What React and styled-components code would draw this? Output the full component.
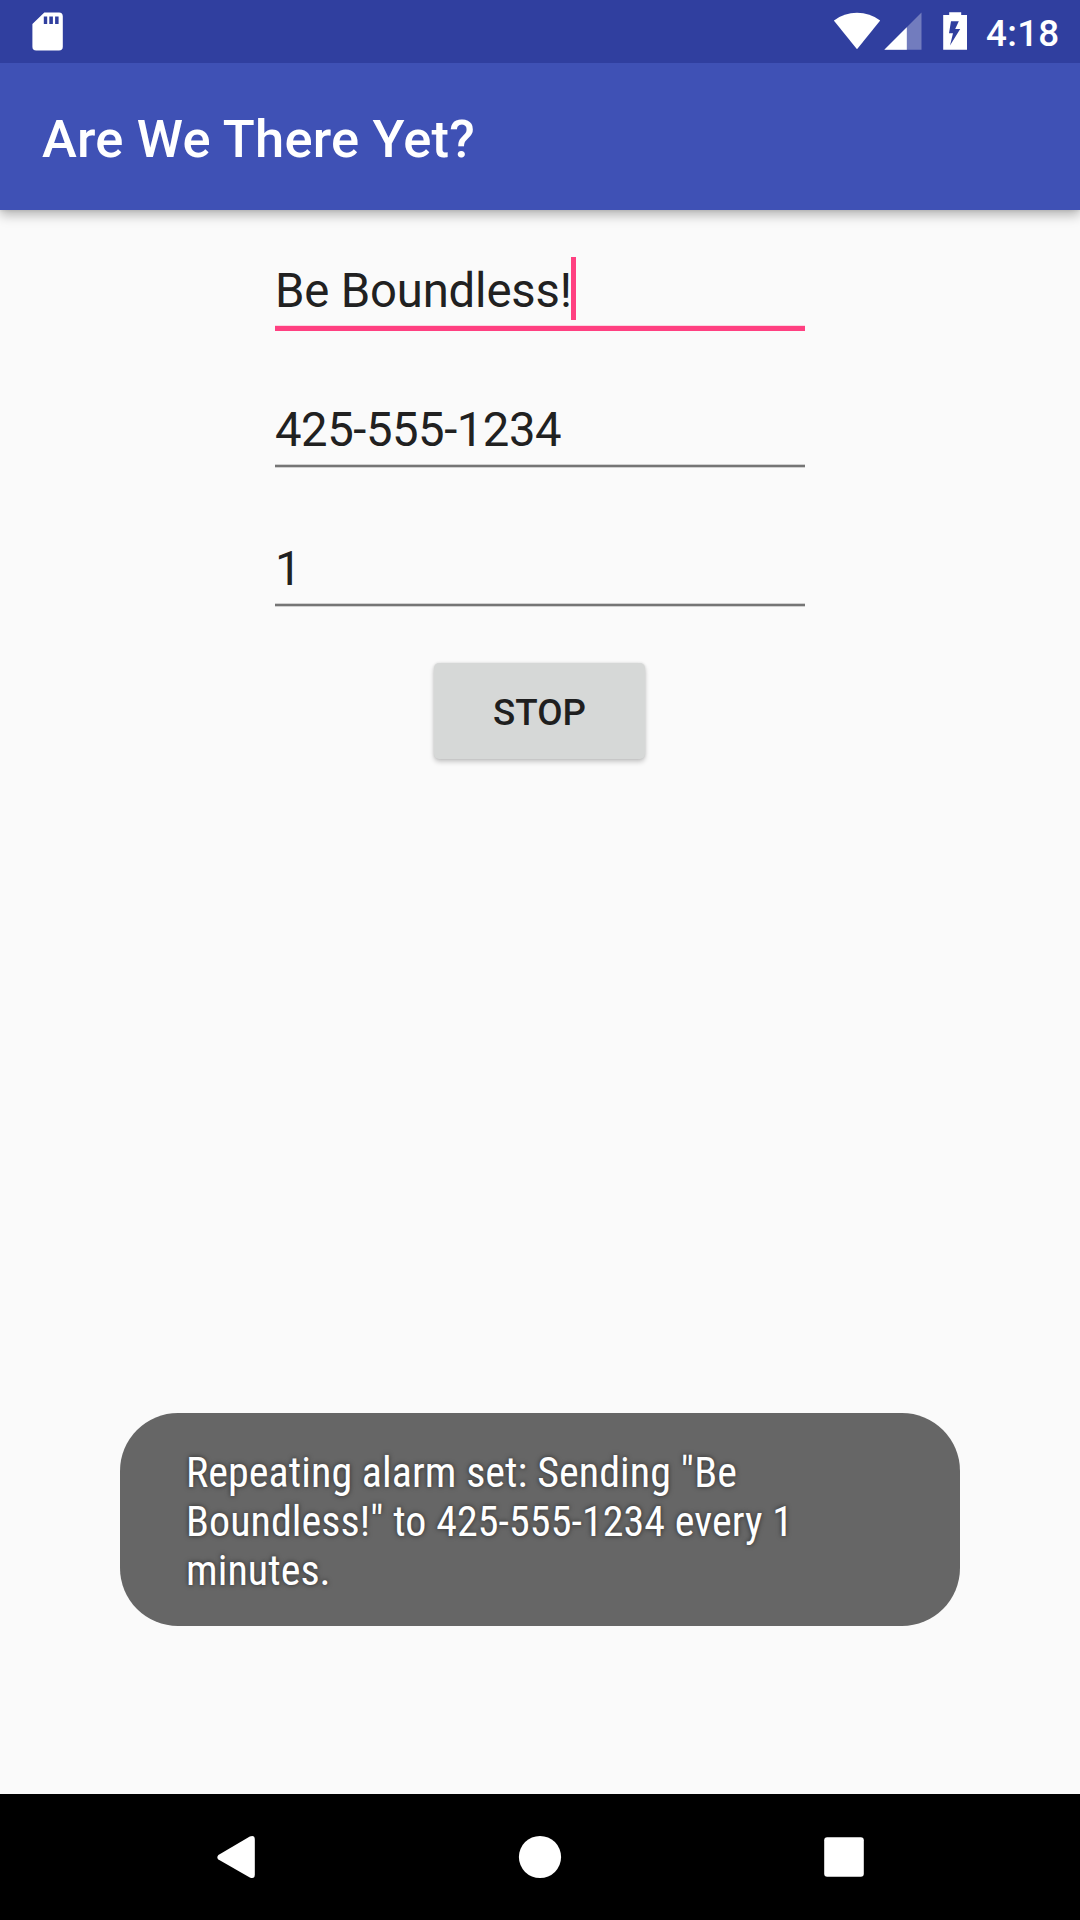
import React from "react";
import styled, { createGlobalStyle } from "styled-components";

const GlobalStyle = createGlobalStyle`
  *, *::before, *::after { box-sizing: border-box; }
  body { margin: 0; background: #fafafa; font-family: Roboto, "Liberation Sans", sans-serif; }
`;

const Screen = styled.div`
  position: relative;
  display: flex;
  flex-direction: column;
  width: 1080px;
  height: 1920px;
  overflow: hidden;
  background: #fafafa;
`;

const StatusBar = styled.header`
  display: flex;
  align-items: flex-start;
  justify-content: space-between;
  z-index: 1;
  height: 63px;
  padding: 0 21px 0 32px;
  background: #303f9f;
  color: #fff;
  flex: none;
`;

const StatusGroup = styled.div`
  display: flex;
`;

const StatusIcon = styled.svg`
  display: block;
  width: ${(p) => p.$width}px;
  height: 63px;
  margin-right: ${(p) => p.$gap || 0}px;
  fill: #fff;
`;

const Clock = styled.span`
  width: 73px;
  font-size: 36.75px;
  font-weight: 500;
  letter-spacing: 0.3px;
  line-height: 43px;
  padding-top: 12px;
`;

const AppBar = styled.div`
  display: flex;
  align-items: center;
  height: 147px;
  padding: 4px 42px 0;
  background: #3f51b5;
  box-shadow: 0 5px 11px rgba(0, 0, 0, 0.28), 0 1px 3px rgba(0, 0, 0, 0.08);
  flex: none;
`;

const Title = styled.h1`
  margin: 0;
  color: #fff;
  font-size: 52.5px;
  font-weight: 500;
  letter-spacing: 0.2px;
  line-height: 62px;
`;

const Form = styled.main`
  display: flex;
  flex: 1;
  flex-direction: column;
  align-items: center;
  padding-top: 47px;
`;

const Field = styled.div`
  display: flex;
  flex-direction: column;
  width: 530px;
  height: 139px;
`;

const FieldText = styled.div`
  display: flex;
  height: 63px;
  color: #212121;
  font-size: 47.25px;
  letter-spacing: ${(p) => p.$tracking}px;
  line-height: 68px;
  white-space: pre;
`;

const Caret = styled.span`
  width: 5px;
  height: 63px;
  margin-left: -1px;
  background: #ff4081;
`;

const Underline = styled.div`
  height: ${(p) => (p.$focused ? 5 : 2)}px;
  margin-top: 6px;
  background: ${(p) => (p.$focused ? "#ff4081" : "#757575")};
  box-shadow: ${(p) => (p.$focused ? "0 -1px 0 #fbd7e2" : "0 -1px 0 #d0d0d0, 0 1px 0 #d0d0d0")};
`;

const StopButton = styled.button`
  width: 211px;
  height: 96px;
  margin: -11px 0 0;
  padding: 0;
  border: 0;
  border-radius: 5px;
  background: #d6d8d7;
  color: #1f1f1f;
  box-shadow: 0 3px 5px rgba(0, 0, 0, 0.2), 0 0 3px rgba(0, 0, 0, 0.12);
  font: 500 36.75px/99px Roboto, "Liberation Sans", sans-serif;
`;

const Actions = styled.div`
  display: flex;
  align-self: stretch;
  justify-content: flex-start;
  padding-left: 434px;
`;

const Toast = styled.div`
  position: absolute;
  left: 120px;
  top: 1413px;
  width: 840px;
  height: 213px;
  padding: 35px 66px;
  border-radius: 58px;
  background: #666;
`;

const ToastText = styled.p`
  margin: 0;
  color: #fff;
  font-family: "Roboto Condensed", Roboto, "Liberation Sans", sans-serif;
  font-stretch: 75%;
  font-size: 42px;
  letter-spacing: 0.06px;
  line-height: 49px;
  text-shadow: 0 0 5px rgba(0, 0, 0, 0.6);
  white-space: pre;
`;

const NavBar = styled.nav`
  display: flex;
  align-items: center;
  justify-content: center;
  gap: 203px;
  height: 126px;
  padding-right: 1px;
  background: #000;
  flex: none;
`;

const NavIcon = styled.svg`
  display: block;
  width: 101px;
  height: 126px;
  fill: #fff;
`;

const fields = [
  { text: "Be Boundless!", tracking: -0.16, focused: true },
  { text: "425-555-1234", tracking: -0.46 },
  { text: "1", tracking: 0 },
];

const toastLines = ['Repeating alarm set: Sending "Be', 'Boundless!" to 425-555-1234 every 1', "minutes."];

export default function App() {
  return (
    <>
      <GlobalStyle />
      <Screen>
        <StatusBar>
          <StatusIcon $width={31} viewBox="32 0 31 63">
            <path
              fillRule="evenodd"
              d="M44.3 12.6H59Q62.8 12.6 62.8 16.4V46.8Q62.8 50.6 59 50.6H36.2Q32.4 50.6 32.4 46.8V24ZM43.8 16.5V24H47.2V16.5ZM49.3 16.5V24H52.9V16.5ZM55.1 16.5V24H58.6V16.5Z"
            />
          </StatusIcon>
          <StatusGroup>
            <StatusIcon $width={47} $gap={3} viewBox="834 0 47 63">
              <path d="M833.8 20.6Q844 12.8 857 12.8T880.2 20.6L857 49.3Z" />
            </StatusIcon>
            <StatusIcon $width={38} $gap={21} viewBox="884 0 38 63">
              <path d="M921.5 12.5V49.7H884.3Z" opacity="0.32" />
              <path d="M906.8 27.2V49.7H884.3Z" />
            </StatusIcon>
            <StatusIcon $width={25} $gap={18} viewBox="943 0 25 63">
              <path
                fillRule="evenodd"
                d="M949.2 12.2H961.2V15H967V49.8H943.2V15H949.2ZM951 21.2L949 33.2H953L950 45.5L960.2 29H955.2L958.8 21.2Z"
              />
            </StatusIcon>
            <Clock>4:18</Clock>
          </StatusGroup>
        </StatusBar>
        <AppBar>
          <Title>Are We There Yet?</Title>
        </AppBar>
        <Form>
          {fields.map((field) => (
            <Field key={field.text}>
              <FieldText $tracking={field.tracking}>
                <span>{field.text}</span>
                {field.focused && <Caret />}
              </FieldText>
              <Underline $focused={field.focused} />
            </Field>
          ))}
          <Actions>
            <StopButton>STOP</StopButton>
          </Actions>
        </Form>
        <NavBar>
          <NavIcon viewBox="185 1794 101 126">
            <path d="M218.4 1854.9L249.8 1836.4Q254.8 1834.6 254.8 1839.4V1874.8Q254.8 1879.4 249.8 1877.6L218.4 1859.4Q216.2 1857.2 218.4 1854.9Z" />
          </NavIcon>
          <NavIcon viewBox="489 1794 101 126">
            <circle cx="540" cy="1857" r="21.1" />
          </NavIcon>
          <NavIcon viewBox="793 1794 101 126">
            <rect x="824.2" y="1837.2" width="39.6" height="39.6" rx="3" />
          </NavIcon>
        </NavBar>
        <Toast>
          <ToastText>{toastLines.join("\n")}</ToastText>
        </Toast>
      </Screen>
    </>
  );
}
